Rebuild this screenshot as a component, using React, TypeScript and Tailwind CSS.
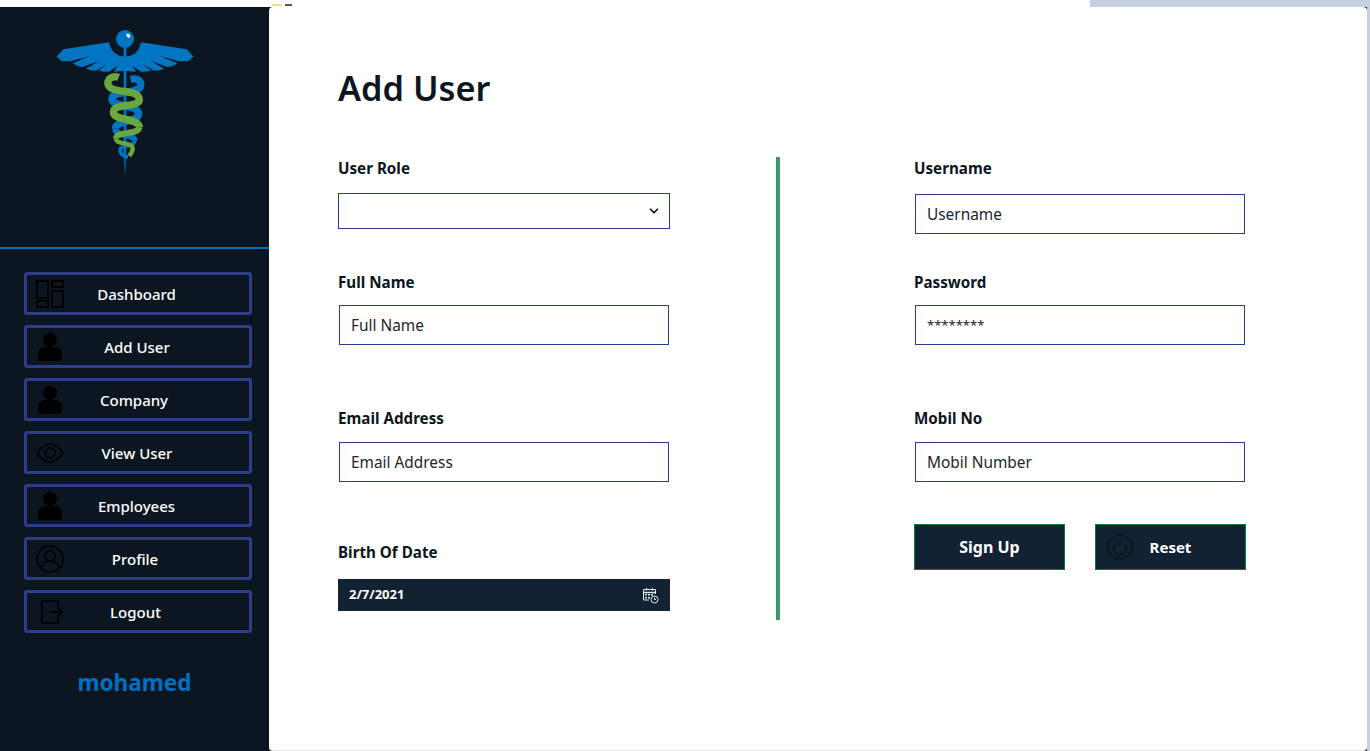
import React from "react";
import { ChevronDown } from "lucide-react";

const font = "font-['Noto_Sans','Open_Sans',sans-serif]";

const Caduceus = () => (
  <svg width="170" height="165" viewBox="0 0 510 495" fill="none">
    <defs>
      <linearGradient id="fade" x1="0" y1="0" x2="0" y2="1">
        <stop offset="0" stopColor="#0070c0" />
        <stop offset="1" stopColor="#0070c0" stopOpacity="0" />
      </linearGradient>
    </defs>
    <path
      d="M207 67 L70 88 L50 110 L66 124 L92 124 L150 108 L98 130 Q112 141 128 141 L178 122 L138 146 Q150 152 168 152 L205 130 L176 152 Q190 156 207 155 L232 138 L222 155 L255 152 L255 110 Q215 108 207 67 Z"
      fill="#0075c2"
    />
    <path
      d="M303 67 L440 88 L460 110 L444 124 L418 124 L360 108 L412 130 Q398 141 382 141 L332 122 L372 146 Q360 152 342 152 L305 130 L334 152 Q320 156 303 155 L278 138 L288 155 L255 152 L255 110 Q295 108 303 67 Z"
      fill="#0075c2"
    />
    <circle cx="255" cy="57" r="27" fill="#0075c2" />
    <ellipse cx="265" cy="47" rx="7" ry="5" fill="#ffffff" transform="rotate(40 265 47)" />
    <path d="M272 178 C298 172 312 192 296 206 C275 222 215 212 216 238 C218 262 298 254 296 282 C294 308 226 300 226 326" stroke="#0075c2" strokeWidth="22" />
    <path d="M226 326 C226 350 284 340 284 362" stroke="#0075c2" strokeWidth="18" />
    <path d="M284 362 C284 382 240 372 240 392 C240 402 252 408 264 412" stroke="#0075c2" strokeWidth="11" />
    <rect x="251" y="80" width="8" height="335" fill="#0075c2" />
    <rect x="252" y="410" width="6" height="60" fill="url(#fade)" />
    <path d="M236 172 C210 162 192 190 212 204 C238 220 298 208 298 240 C298 262 220 250 220 276 C220 304 298 292 298 322" stroke="#6aa83f" strokeWidth="22" />
    <path d="M298 322 C296 346 228 332 228 356" stroke="#6aa83f" strokeWidth="18" />
    <path d="M228 356 C228 376 278 364 278 386 C278 394 274 400 268 408" stroke="#6aa83f" strokeWidth="13" />
  </svg>
);

const UserIcon = () => (
  <svg width="24" height="28" viewBox="0 0 24 28" fill="#000">
    <circle cx="12" cy="7" r="7" />
    <path d="M0 21c0-5 4-7 7-7h10c3 0 7 2 7 7v4c0 2-1 3-3 3H3c-2 0-3-1-3-3z" />
  </svg>
);

const DashIcon = () => (
  <svg width="28" height="28" viewBox="0 0 28 28" fill="none" stroke="#000" strokeWidth="2">
    <rect x="1" y="1" width="11" height="17" />
    <rect x="16" y="1" width="11" height="6" />
    <rect x="16" y="11" width="11" height="16" />
    <rect x="1" y="21" width="11" height="6" />
  </svg>
);

const EyeIcon = () => (
  <svg width="28" height="20" viewBox="0 0 28 20" fill="none" stroke="#000" strokeWidth="1.5">
    <path d="M1 10C6 3 10 1 14 1s8 2 13 9c-5 7-9 9-13 9S6 17 1 10z" />
    <circle cx="14" cy="10" r="5" />
  </svg>
);

const ProfileIcon = () => (
  <svg width="28" height="28" viewBox="0 0 28 28" fill="none" stroke="#000" strokeWidth="1.5">
    <circle cx="14" cy="14" r="13" />
    <circle cx="14" cy="11" r="5" />
    <path d="M5 23c1-5 5-7 9-7s8 2 9 7" />
  </svg>
);

const LogoutIcon = () => (
  <svg width="22" height="24" viewBox="0 0 22 24" fill="none" stroke="#000" strokeWidth="1.5">
    <path d="M17 6V1H1v22h16v-5" />
    <path d="M8 12h13M16 7l5 5-5 5" />
  </svg>
);

const PowerIcon = () => (
  <svg width="28" height="28" viewBox="0 0 28 28" fill="none" stroke="#0b1620" strokeWidth="1">
    <circle cx="14" cy="14" r="13" />
    <circle cx="14" cy="14" r="11.5" />
    <path d="M10 10a6.5 6.5 0 1 0 8 0" strokeWidth="1.5" />
    <path d="M14 7v6" strokeWidth="1.5" />
  </svg>
);

const CalendarIcon = () => (
  <svg width="17" height="17" viewBox="0 0 17 17" fill="none" stroke="#e5e7eb" strokeWidth="1">
    <path d="M7 13H1.5V2.5h12V7" />
    <path d="M1.5 5.5h12" strokeWidth="1.5" />
    <path d="M4.5 1v2.5M10.5 1v2.5" />
    <rect x="3" y="7" width="2" height="1.5" fill="#e5e7eb" stroke="none" />
    <rect x="6" y="7" width="2" height="1.5" fill="#e5e7eb" stroke="none" />
    <rect x="9" y="7" width="2" height="1.5" fill="#e5e7eb" stroke="none" />
    <rect x="3" y="10" width="2" height="1.5" fill="#e5e7eb" stroke="none" />
    <rect x="6" y="10" width="2" height="1.5" fill="#e5e7eb" stroke="none" />
    <circle cx="12.5" cy="12.5" r="3.5" />
    <path d="M12.5 10.5v2h1.5" />
  </svg>
);

const navItems = [
  { name: "Dashboard", icon: <DashIcon />, cls: "ml-[-3px]", iconBox: "pl-[9px]" },
  { name: "Add User", icon: <UserIcon />, cls: "ml-[-2px]", iconBox: "pl-[11px]" },
  { name: "Company", icon: <UserIcon />, cls: "ml-[-8px]", iconBox: "pl-[11px]" },
  { name: "View User", icon: <EyeIcon />, cls: "ml-[-2px]", iconBox: "pl-[9px]" },
  { name: "Employees", icon: <UserIcon />, cls: "ml-[-3px]", iconBox: "pl-[11px]" },
  { name: "Profile", icon: <ProfileIcon />, cls: "ml-[-6px]", iconBox: "pl-[9px]" },
  { name: "Logout", icon: <LogoutIcon />, cls: "ml-[-5px]", iconBox: "pl-[14px]" },
];

const labelCls = "block h-[22px] text-[15.2px] leading-[22px] font-bold text-[#0b1620]";

const Field = (props: { label: string; placeholder: string; top: string; gap: string; size?: string }) => (
  <div className={props.top}>
    <label className={labelCls}>{props.label}</label>
    <input
      placeholder={props.placeholder}
      className={`${props.gap} ${props.size ?? "text-[15.4px]"} ml-[1px] block h-[40px] w-[330px] border border-[#2c3a8c] px-[11px] text-[#212529] outline-none placeholder:text-[#212529]`}
    />
  </div>
);

export default function App() {
  return (
    <div className={`flex h-[751px] w-[1370px] flex-col overflow-hidden bg-white ${font}`}>
      <div className="flex h-[7px] shrink-0">
        <div className="flex w-[1090px] items-end gap-[3px] bg-white pb-[1px] pl-[272px]">
          <div className="h-[2px] w-[10px] bg-[#f5e08a]" />
          <div className="h-[2px] w-[7px] bg-[#5a4f80]" />
        </div>
        <div className="flex-1 bg-[#c5cfe2]" />
      </div>
      <div className="flex min-h-0 flex-1 bg-[#0b1620]">
        <aside className="flex w-[269px] shrink-0 flex-col">
          <div className="h-[242px] shrink-0 border-b-2 border-[#0070c0] pl-[40px] pt-[13px]">
            <Caduceus />
          </div>
          <nav className="flex flex-col gap-[10px] pl-[24px] pr-[17px] pt-[23px]">
            {navItems.map((item) => (
              <div key={item.name} className="relative flex h-[43px] items-center justify-center rounded-[3px] border-[3px] border-[#2f3c8a]">
                <div className={`absolute inset-y-0 left-0 flex items-center ${item.iconBox}`}>{item.icon}</div>
                <span className={`pt-[2px] text-[15px] font-medium text-white ${item.cls}`}>{item.name}</span>
              </div>
            ))}
          </nav>
          <div className="mt-[34px] text-center text-[22.6px] font-bold leading-[32px] text-[#0070c0]">mohamed</div>
        </aside>
        <main className="flex-1 rounded-[4px] border-b border-[#e9ecef] bg-white pl-[69px]">
          <h1 className="mt-[57px] text-[34.3px] font-semibold leading-[48px] text-[#0b1620]">Add User</h1>
          <div className="mt-[45px] flex">
            <div className="w-[332px]">
              <label className={labelCls}>User Role</label>
              <div className="relative mt-[14px]">
                <select className="block h-[36px] w-[332px] appearance-none border border-[#2c3a8c] bg-white outline-none" />
                <ChevronDown className="absolute right-[9px] top-[11px] h-[14px] w-[14px] text-[#0b1620]" strokeWidth={3} />
              </div>
              <Field label="Full Name" placeholder="Full Name" top="mt-[42px]" gap="mt-[12px]" />
              <Field label="Email Address" placeholder="Email Address" top="mt-[62px]" gap="mt-[13px]" />
              <div className="mt-[59px]">
                <label className={labelCls}>Birth Of Date</label>
                <div className="mt-[16px] flex h-[32px] items-center justify-between bg-[#122232] pl-[11px] pr-[11px] text-[13px] font-bold text-white">
                  <span>2/7/2021</span>
                  <CalendarIcon />
                </div>
              </div>
            </div>
            <div className="ml-[106px] h-[463px] w-[4px] bg-gradient-to-r from-[#2f8f8a] to-[#4f9e4f]" />
            <div className="ml-[134px] w-[332px]">
              <Field label="Username" placeholder="Username" top="" gap="mt-[15px]" />
              <Field label="Password" placeholder="********" top="mt-[37px]" gap="mt-[12px]" size="text-[13px]" />
              <Field label="Mobil No" placeholder="Mobil Number" top="mt-[62px]" gap="mt-[13px]" />
              <div className="mt-[42px] flex gap-[30px]">
                <button className="flex h-[46px] w-[151px] items-center justify-center border border-[#0b7a3b] bg-[#122232] text-[16px] font-bold text-white">Sign Up</button>
                <button className="relative flex h-[46px] w-[151px] items-center justify-center border border-[#0b7a3b] bg-[#122232] text-[15px] font-bold text-white">
                  <span className="absolute left-[10px] top-[8px]"><PowerIcon /></span>
                  Reset
                </button>
              </div>
            </div>
          </div>
        </main>
        <div className="w-[3px] shrink-0 bg-[#c5cfe2]" />
      </div>
    </div>
  );
}
